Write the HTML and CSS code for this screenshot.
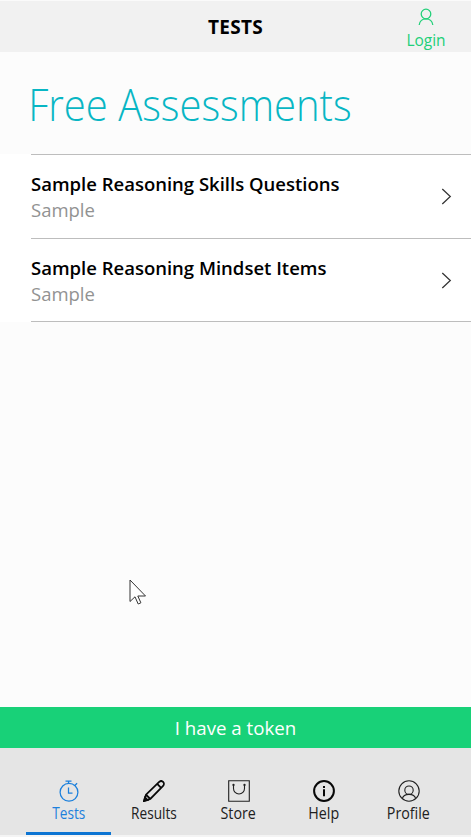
FILE: index.html
```html
<!DOCTYPE html>
<html lang="en">
<head>
<meta charset="utf-8">
<title>Tests</title>
<link rel="stylesheet" href="styles.css">
</head>
<body>
<div class="app">
  <header class="topbar">
    <h1 class="topbar-title">TESTS</h1>
    <a class="login">
      <svg width="16" height="18" viewBox="0 0 16 18"><circle cx="8" cy="6" r="4.8"/><path d="M1.200 17c.3-4 3.300-6.200 6.800-6.200s6.500 2.200 6.800 6.200"/></svg>
      <span class="login-label">Login</span>
    </a>
  </header>
  <main class="content">
    <h2 class="heading">Free Assessments</h2>
    <ul class="list">
      <li class="item">
        <div class="item-body">
          <div><p class="item-title">Sample Reasoning Skills Questions</p><p class="item-sub">Sample</p></div>
          <svg class="chevron" width="11" height="17" viewBox="0 0 11 17"><path d="M1.300 1 9.300 8.500 1.300 16"/></svg>
        </div>
      </li>
      <li class="item">
        <div class="item-body">
          <div><p class="item-title">Sample Reasoning Mindset Items</p><p class="item-sub">Sample</p></div>
          <svg class="chevron" width="11" height="17" viewBox="0 0 11 17"><path d="M1.300 1 9.300 8.500 1.300 16"/></svg>
        </div>
      </li>
    </ul>
  </main>
  <button class="token">I have a token</button>
  <nav class="tabs">
    <a class="tab active">
      <svg width="22" height="22" viewBox="0 0 22 22"><circle cx="11" cy="12.300" r="8.900"/><path d="M7.500 1.200h6M10.500 1.200v2.300M16.800 5.500l2.300-2.300M10.500 7.500v5.500h4"/></svg>
      <span class="narrow">Tests</span>
    </a>
    <a class="tab">
      <svg class="pencil" width="22" height="22" viewBox="0 0 22 22"><path d="M1.200 20.800 3 14.700 16.200 1.900a2.700 2.700 0 0 1 3.900 3.900L7.300 19ZM3 14.700 7.300 19M14.200 3.900l3.900 3.900"/><path d="m1 21 1-3.600 2.600 2.600Z" fill="#111"/></svg>
      <span class="narrow">Results</span>
    </a>
    <a class="tab">
      <svg class="thin" width="22" height="22" viewBox="0 0 22 22"><path d="M.7.700h20.600v20.600H.700ZM5.500 5v3.500a5.500 5.500 0 0 0 11 0V5"/><circle cx="5.500" cy="5" r=".6"/><circle cx="16.500" cy="5" r=".6"/></svg>
      <span>Store</span>
    </a>
    <a class="tab">
      <svg class="bold" width="22" height="22" viewBox="0 0 22 22"><circle cx="11" cy="11" r="9.900"/><path d="M11 9.200v7M11 6v2"/></svg>
      <span>Help</span>
    </a>
    <a class="tab">
      <svg class="thin" width="22" height="22" viewBox="0 0 22 22"><circle cx="11" cy="11" r="10.200"/><circle cx="11" cy="10.200" r="4.200"/><path d="M4.300 18.700c.6-2.800 3.500-4.300 6.700-4.300s6.100 1.500 6.700 4.300"/></svg>
      <span>Profile</span>
    </a>
  </nav>
  <svg class="cursor" width="18" height="27" viewBox="0 0 18 27"><path d="M1 1v21.500l5-4.700 3.200 7.200 2.700-1.200L8.800 17H16.500Z"/></svg>
</div>
</body>
</html>
```

FILE: styles.css
```css
* { box-sizing: border-box; }
body { margin: 0; font-family: "Open Sans", "Noto Sans", sans-serif; color: #000; }
h1, h2, p, ul { margin: 0; padding: 0; }
svg { display: block; fill: none; stroke: currentColor; stroke-width: 1.250; flex: none; }
span, p { white-space: nowrap; }
.app { position: relative; width: 471px; height: 837px; display: flex; flex-direction: column; background: #fcfcfc; overflow: hidden; }
.topbar { height: 52px; flex: none; display: grid; grid-template-columns: 90px 1fr 90px; background: #f1f1f1; border-top: 1px solid #fafafa; }
.topbar-title { grid-column: 2; text-align: center; font-size: 19px; line-height: 53px; height: 51px; font-weight: 700; letter-spacing: .3px; }
.login { display: flex; flex-direction: column; align-items: center; padding-top: 7px; color: #20cf78; }
.login-label { font-size: 15.500px; line-height: 20px; margin-top: 4px; }
.content { flex: 1; }
.heading { height: 102px; padding-left: 31px; font-size: 44px; line-height: 104px; font-weight: 300; color: #08b6c4; white-space: nowrap; transform: scaleX(.909); transform-origin: left; }
.list { list-style: none; background: #fff; }
.item { padding-left: 31px; }
.item-body { height: 84px; border-top: 1px solid #bdbdbd; display: flex; justify-content: space-between; padding: 16px 19px 0 0; }
.item:last-child .item-body { height: 84px; border-bottom: 1px solid #bdbdbd; }
.item-title { font-size: 18.500px; line-height: 26px; font-weight: 600; }
.item-sub { font-size: 18.500px; line-height: 26px; color: #929292; }
.chevron { margin-top: 17px; color: #333; }
.token { height: 41px; flex: none; border: 0; padding: 0; background: #18d178; color: #fff; font: 18.700px/41px "Open Sans", sans-serif; }
.tabs { height: 89px; flex: none; display: grid; grid-template-columns: repeat(5, 85px); padding-left: 26px; background: #e5e5e5; border-bottom: 2px solid #f4f4f4; }
.tab { display: flex; flex-direction: column; align-items: center; padding-top: 32px; font-size: 15.500px; line-height: 20px; color: #202020; }
.tab span { margin-top: 1px; transform: scaleX(.92); }
.tab .narrow { transform: scaleX(.88); }
.tab.active { color: #1c80dc; border-bottom: 3px solid #0c74d2; }
.bold { stroke-width: 2; color: #080808; }
.pencil { stroke-width: 1.800; color: #080808; }
.thin { stroke-width: 1.100; }
.cursor { position: absolute; left: 129px; top: 579px; fill: #fff; color: #333; stroke-width: 1; }
```
